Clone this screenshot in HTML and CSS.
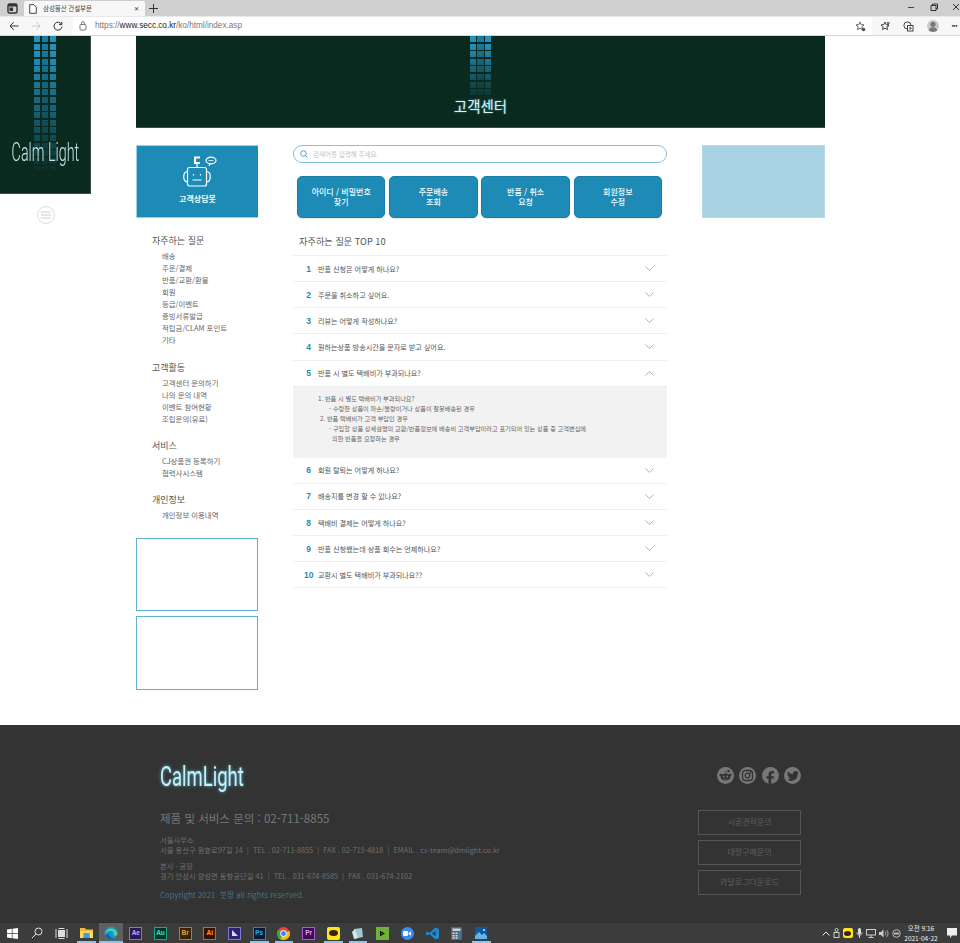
FILE: index.html
```html
<!DOCTYPE html>
<html lang="ko">
<head>
<meta charset="utf-8">
<title>삼성물산 건설부문</title>
<link rel="stylesheet" href="styles.css">
</head>
<body>
<div class="tabbar">
  <div class="tab-pin"><svg width="11" height="11" viewBox="0 0 11 11"><rect x="1" y="1" width="9" height="9" rx="1.5" fill="none" stroke="#333" stroke-width="1.4"/><rect x="1" y="1" width="9" height="2.5" fill="#333"/><rect x="2.5" y="4.5" width="3.5" height="3.5" fill="#333"/></svg></div>
  <div class="tab">
    <svg width="8" height="10" viewBox="0 0 8 10"><path d="M.7.7h4.2l2.4 2.4v6.2H.7z" fill="#fff" stroke="#444" stroke-width="1"/></svg>
    <span class="tab-title">삼성물산 건설부문</span>
    <span class="tab-x">✕</span>
  </div>
  <div class="tab-new"><svg width="9" height="9" viewBox="0 0 9 9"><path d="M4.500 0v9M0 4.500h9" stroke="#333" stroke-width="1"/></svg></div>
  <div class="winctl">
    <svg width="8" height="8" viewBox="0 0 8 8"><path d="M1 4.500h6" stroke="#444" stroke-width="1"/></svg>
    <svg width="8" height="8" viewBox="0 0 8 8"><path d="M1 2.500h5v5H1zM2.500 2.500V1h5v5H6" fill="none" stroke="#333" stroke-width="1"/></svg>
    <svg width="8" height="8" viewBox="0 0 8 8"><path d="M1 1l6 6M7 1l-6 6" stroke="#333" stroke-width="1"/></svg>
  </div>
</div>
<div class="toolbar">
  <div class="nav-btns">
    <svg width="10" height="10" viewBox="0 0 10 10"><path d="M9.500 5H1M4.700 1.200L1 5l3.700 3.800" fill="none" stroke="#333" stroke-width="1"/></svg>
    <svg width="10" height="10" viewBox="0 0 10 10"><path d="M.5 5H9M5.300 1.200L9 5 5.300 8.800" fill="none" stroke="#ccc" stroke-width="1"/></svg>
    <svg width="10" height="10" viewBox="0 0 10 10"><path d="M8.600 3.400A4 4 0 1 0 9 5.600M8.800 .8v2.800H6" fill="none" stroke="#333" stroke-width="1"/></svg>
  </div>
  <div class="omnibox">
    <svg width="8" height="10" viewBox="0 0 8 10"><rect x="1" y="3.500" width="6" height="5.500" rx="1" fill="none" stroke="#777" stroke-width="1"/><path d="M2.500 3.500V2.200a1.500 1.500 0 0 1 3 0v1.300" fill="none" stroke="#777" stroke-width="1"/></svg>
    <span class="url"><span class="url-dim">https://</span>www.secc.co.kr<span class="url-dim">/ko/html/index.asp</span></span>
    <svg class="omni-star" width="11" height="11" viewBox="0 0 11 11"><path d="M5 1l1.200 2.600 2.800.3-2.100 1.900.6 2.800L5 7.200 2.500 8.600l.6-2.800L1 3.900l2.800-.3z" fill="none" stroke="#555" stroke-width=".9"/><circle cx="8.500" cy="8.500" r="1.800" fill="#555"/></svg>
  </div>
  <div class="tool-icons">
    <svg width="11" height="11" viewBox="0 0 11 11"><path d="M5 1l1.200 2.600 2.800.3-2.100 1.900.6 2.800L5 7.200 2.500 8.600l.6-2.800L1 3.900l2.800-.3z" fill="none" stroke="#444" stroke-width="1"/><path d="M8 1v5M7 2h3" stroke="#444" stroke-width=".9"/></svg>
    <svg width="11" height="11" viewBox="0 0 11 11"><circle cx="4.500" cy="4.500" r="3.600" fill="none" stroke="#444" stroke-width="1"/><rect x="4.500" y="4.500" width="5.500" height="5.500" fill="#f7f7f7" stroke="#444" stroke-width="1"/><path d="M7.200 5.800v3M5.800 7.200h3" stroke="#444" stroke-width=".8"/></svg>
    <div class="avatar"><svg width="12" height="12" viewBox="0 0 12 12"><circle cx="6" cy="4.300" r="2.600" fill="#777"/><path d="M1.500 12c0-3.200 2-4.800 4.500-4.800s4.500 1.600 4.500 4.800z" fill="#777"/></svg></div>
    <span class="dots">···</span>
  </div>
</div>

<div class="page">
  <aside class="rail">
    <div class="logo-card">
      <div class="pixels pixels-long"><i></i><i></i><i></i></div>
      <div class="logo-word">Calm Light</div>
    </div>
    <button class="menu-btn" aria-label="메뉴"><svg width="10" height="8" viewBox="0 0 10 8"><path d="M0 1h10M0 4h10M0 7h10" stroke="#ccc" stroke-width="1"/></svg></button>
  </aside>

  <main class="main">
    <header class="hero">
      <div class="pixels pixels-short"><i></i><i></i><i></i></div>
      <h1 class="hero-title">고객센터</h1>
    </header>

    <div class="columns">
      <div class="col-left">
        <a class="bot-card">
          <svg width="38" height="36" viewBox="0 0 38 36" fill="none" stroke="#fff" stroke-width="1.2">
            <rect x="8.500" y="11.500" width="19" height="18.500" rx="2"/>
            <path d="M8.500 15.500c-5 .3-5 10 0 10.500M27.500 15.500c5 .3 5 10 0 10.500"/>
            <path d="M18 11.500V8"/>
            <path d="M21 1.500h-5v5.500h5" stroke-width="2"/>
            <ellipse cx="32" cy="4.500" rx="5" ry="3.300"/>
            <path d="M31 7.800l-1 2" />
            <path d="M29.500 4.500h5" stroke-width=".8"/>
            <path d="M14.500 18v1.500M21.500 18v1.500M13.500 24h9"/>
          </svg>
          <span>고객상담봇</span>
        </a>
        <nav class="side-nav">
          <section class="nav-group">
            <h2>자주하는 질문</h2>
            <ul><li>배송</li><li>주문/결제</li><li>반품/교환/환불</li><li>회원</li><li>등급/이벤트</li><li>증빙서류발급</li><li>적립금/CLAM 포인트</li><li>기타</li></ul>
          </section>
          <section class="nav-group">
            <h2>고객활동</h2>
            <ul><li>고객센터 문의하기</li><li>나의 문의 내역</li><li>이벤트 참여현황</li><li>조립문의(유료)</li></ul>
          </section>
          <section class="nav-group">
            <h2>서비스</h2>
            <ul><li>CJ상품권 등록하기</li><li>협력사시스템</li></ul>
          </section>
          <section class="nav-group">
            <h2>개인정보</h2>
            <ul><li>개인정보 이용내역</li></ul>
          </section>
        </nav>
        <div class="ad-box"></div>
        <div class="ad-box"></div>
      </div>

      <div class="col-center">
        <div class="search">
          <svg width="8" height="8" viewBox="0 0 8 8"><circle cx="3.500" cy="3.500" r="2.800" fill="none" stroke="#5a9fbc" stroke-width="1"/><path d="M5.500 5.500L7.500 7.500" stroke="#5a9fbc" stroke-width="1"/></svg>
          <span>검색어를 입력해 주세요.</span>
        </div>
        <div class="quick">
          <a>아이디 / 비밀번호<br>찾기</a>
          <a>주문배송<br>조회</a>
          <a>반품 / 취소<br>요청</a>
          <a>회원정보<br>수정</a>
        </div>
        <h2 class="faq-title">자주하는 질문 TOP 10</h2>
        <div class="faq">
          <div class="faq-row"><b>1</b><span>반품 신청은 어떻게 하나요?</span><svg class="chev" width="9" height="5" viewBox="0 0 9 5"><path d="M.5.500l4 4 4-4"/></svg></div>
          <div class="faq-row"><b>2</b><span>주문을 취소하고 싶어요.</span><svg class="chev" width="9" height="5" viewBox="0 0 9 5"><path d="M.5.500l4 4 4-4"/></svg></div>
          <div class="faq-row"><b>3</b><span>리뷰는 어떻게 작성하나요?</span><svg class="chev" width="9" height="5" viewBox="0 0 9 5"><path d="M.5.500l4 4 4-4"/></svg></div>
          <div class="faq-row"><b>4</b><span>원하는상품 방송시간을 문자로 받고 싶어요.</span><svg class="chev" width="9" height="5" viewBox="0 0 9 5"><path d="M.5.500l4 4 4-4"/></svg></div>
          <div class="faq-row"><b>5</b><span>반품 시 별도 택배비가 부과되나요?</span><svg class="chev" width="9" height="5" viewBox="0 0 9 5"><path d="M.5 4.500l4-4 4 4"/></svg></div>
          <div class="faq-detail">
            <p>1. 반품 시 별도 택배비가 부과되나요?</p>
            <p class="ind-a">- 수령한 상품이 파손/불량이거나 상품이 잘못배송된 경우</p>
            <p class="ind-b">2. 반품 택배비가 고객 부담인 경우</p>
            <p class="ind-a">- 구입할 상품 상세설명의 교환/반품정보에 배송비 고객부담이라고 표기되어 있는 상품 중 고객변심에</p>
            <p class="ind-c">의한 반품을 요청하는 경우</p>
          </div>
          <div class="faq-row"><b>6</b><span>회원 탈퇴는 어떻게 하나요?</span><svg class="chev" width="9" height="5" viewBox="0 0 9 5"><path d="M.5.500l4 4 4-4"/></svg></div>
          <div class="faq-row"><b>7</b><span>배송지를 변경 할 수 있나요?</span><svg class="chev" width="9" height="5" viewBox="0 0 9 5"><path d="M.5.500l4 4 4-4"/></svg></div>
          <div class="faq-row"><b>8</b><span>택배비 결제는 어떻게 하나요?</span><svg class="chev" width="9" height="5" viewBox="0 0 9 5"><path d="M.5.500l4 4 4-4"/></svg></div>
          <div class="faq-row"><b>9</b><span>반품 신청했는데 상품 회수는 언제하나요?</span><svg class="chev" width="9" height="5" viewBox="0 0 9 5"><path d="M.5.500l4 4 4-4"/></svg></div>
          <div class="faq-row"><b>10</b><span>교환시 별도 택배비가 부과되나요??</span><svg class="chev" width="9" height="5" viewBox="0 0 9 5"><path d="M.5.500l4 4 4-4"/></svg></div>
        </div>
      </div>

      <div class="col-right"><div class="promo"></div></div>
    </div>
  </main>
</div>

<footer class="footer">
  <div class="foot-left">
    <div class="foot-logo">CalmLight</div>
    <div class="foot-phone">제품 및 서비스 문의 : 02-711-8855</div>
    <div class="foot-addr">
      <p>서울사무소</p>
      <p>서울 용산구 원효로97길 14 &nbsp;|&nbsp; TEL . 02-711-8855 &nbsp;|&nbsp; FAX . 02-719-4818 &nbsp;|&nbsp; EMAIL . cs-team@dmlight.co.kr</p>
    </div>
    <div class="foot-addr">
      <p>본사 · 공장</p>
      <p>경기 안성시 양성면 동항공단길 41 &nbsp;|&nbsp; TEL . 031-674-8585 &nbsp;|&nbsp; FAX . 031-674-2102</p>
    </div>
    <div class="foot-copy">Copyright 2021. 붓짱 all rights reserved.</div>
  </div>
  <div class="foot-right">
    <div class="social">
      <span><svg width="13" height="13" viewBox="0 0 13 13"><ellipse cx="6.500" cy="8" rx="5" ry="3.500" fill="#333"/><circle cx="1.800" cy="6" r="1.300" fill="#333"/><circle cx="11.200" cy="6" r="1.300" fill="#333"/><circle cx="9.800" cy="2.200" r="1.100" fill="#333"/><path d="M6.500 4.500L7.200 2l2.500.3" fill="none" stroke="#333" stroke-width=".7"/><circle cx="4.700" cy="7.500" r=".9" fill="#777"/><circle cx="8.300" cy="7.500" r=".9" fill="#777"/><path d="M4.700 9.700c1 .7 2.600.7 3.600 0" fill="none" stroke="#777" stroke-width=".6"/></svg></span>
      <span><svg width="13" height="13" viewBox="0 0 13 13" fill="none" stroke="#333" stroke-width="1.300"><rect x="1.500" y="1.500" width="10" height="10" rx="2.800"/><circle cx="6.500" cy="6.500" r="2.300"/><circle cx="9.500" cy="3.500" r=".4"/></svg></span>
      <span><svg width="17" height="17" viewBox="0 0 24 24"><path d="M14 9h3V5.500h-3c-2.800 0-4.800 2-4.800 4.800V13H6.500v3.500h2.700V24h3.800v-7.500h3.200l.8-3.500h-4v-2.700c0-.7.400-1.300 1-1.300z" fill="#333"/></svg></span>
      <span><svg width="12" height="12" viewBox="0 0 24 24"><path fill="#333" d="M23.953 4.570a10 10 0 01-2.825.775 4.958 4.958 0 002.163-2.723c-.951.555-2.005.959-3.127 1.184a4.920 4.920 0 00-8.384 4.482C7.690 8.095 4.067 6.130 1.640 3.162a4.822 4.822 0 00-.666 2.475c0 1.710.870 3.213 2.188 4.096a4.904 4.904 0 01-2.228-.616v.060a4.923 4.923 0 003.946 4.827 4.996 4.996 0 01-2.212.085 4.936 4.936 0 004.604 3.417 9.867 9.867 0 01-6.102 2.105c-.390 0-.779-.023-1.170-.067a13.995 13.995 0 007.557 2.209c9.053 0 13.998-7.496 13.998-13.985 0-.210 0-.420-.015-.630A9.935 9.935 0 0024 4.590z"/></svg></span>
    </div>
    <a class="foot-btn">시공견적문의</a>
    <a class="foot-btn">대량구매문의</a>
    <a class="foot-btn">카달로그다운로드</a>
  </div>
</footer>

<div class="taskbar">
  <div class="task-apps">
    <span class="app"><svg width="13" height="13" viewBox="0 0 13 13" fill="#fff"><path d="M1 2.500l4.800-.7v4.400H1zM6.500 1.700L12 1v5.200H6.500zM1 6.900h4.800v4.300L1 10.500zM6.500 6.900H12V12l-5.500-.8z"/></svg></span>
    <span class="app"><svg width="12" height="12" viewBox="0 0 12 12" fill="none" stroke="#ddd" stroke-width="1"><circle cx="7.500" cy="4.500" r="3.500"/><path d="M5 7L1 11"/></svg></span>
    <span class="app"><svg width="13" height="11" viewBox="0 0 13 11" fill="none" stroke="#ddd" stroke-width="1"><rect x="3.500" y="2.500" width="6" height="6" fill="#ddd"/><path d="M1 1v9M12 1v9M3.500 .5h6M3.500 10.500h6"/></svg></span>
    <span class="app run"><svg width="13" height="12" viewBox="0 0 13 12"><path d="M0 1h5l1 1.500h7V11H0z" fill="#f0b93a"/><rect x="0" y="4" width="13" height="7" fill="#ffd766"/><rect x="3.500" y="6" width="6" height="5" fill="#3f9ad6"/></svg></span>
    <span class="app run active"><svg width="14" height="14" viewBox="0 0 14 14"><circle cx="7" cy="7" r="6.500" fill="#1593d8"/><path d="M1 8c.5-4 4-6 7-5.500 3 .5 5.500 3 5.500 5.500 0 2-3 2-4 1 1-3-1-4-3-4S2.500 6 1 8z" fill="#4dd48a"/><path d="M5 8.500C5 11 8 13 11 11.500 8 14 3 13 1.800 9.500 2.500 8 4 7.500 5 8.500z" fill="#0a5fa8"/></svg></span>
    <span class="app"><em class="tile t-ae">Ae</em></span>
    <span class="app"><em class="tile t-au">Au</em></span>
    <span class="app"><em class="tile t-br">Br</em></span>
    <span class="app"><em class="tile t-ai">Ai</em></span>
    <span class="app"><em class="tile t-in"><svg width="8" height="8" viewBox="0 0 8 8"><path d="M1 1l6 6H1z" fill="#d9d9ff"/></svg></em></span>
    <span class="app run"><em class="tile t-ps">Ps</em></span>
    <span class="app run"><svg width="13" height="13" viewBox="0 0 13 13"><circle cx="6.500" cy="6.500" r="6.500" fill="#e8453c"/><path d="M6.500 6.500L1 10a6.500 6.500 0 0 0 5.500 3 6.500 6.500 0 0 0 6-9z" fill="#fbbc05"/><path d="M6.500 6.500L3.200 12a6.500 6.500 0 0 1-2.400-9z" fill="#30a853"/><circle cx="6.500" cy="6.500" r="3" fill="#4285f4" stroke="#fff" stroke-width="1"/></svg></span>
    <span class="app"><em class="tile t-pr">Pr</em></span>
    <span class="app run"><span class="kakao"><i></i></span></span>
    <span class="app run"><svg width="13" height="13" viewBox="0 0 13 13"><path d="M3 2l8-1 1 9-9 2z" fill="#9cc9d6"/><path d="M1 5l3-3 3 9-4 1z" fill="#d7e6ea"/></svg></span>
    <span class="app"><span class="play"><svg width="7" height="7" viewBox="0 0 7 7"><path d="M1 .8l5 2.700-5 2.700zM2.200 2.700v1.600l1.500-.8z" fill="#111" fill-rule="evenodd"/></svg></span></span>
    <span class="app"><span class="zoom"><svg width="8" height="5" viewBox="0 0 8 5" fill="#fff"><rect width="5" height="5" rx="1"/><path d="M5.500 2L8 .5v4L5.500 3z"/></svg></span></span>
    <span class="app"><svg width="13" height="13" viewBox="0 0 13 13"><path d="M9.500.5L13 2v9l-3.500 1.500L3.500 7l-2 1.500L0 7.500v-2L1.500 4.500l2 1.500zM9.500 3.800L6 6.500l3.500 2.700z" fill="#1f8ad2" fill-rule="evenodd"/></svg></span>
    <span class="app"><svg width="11" height="13" viewBox="0 0 11 13"><rect width="11" height="13" fill="#59636e"/><rect x="1.500" y="1.500" width="8" height="2.500" fill="#c5d3dc"/><path d="M1.500 5.500h2v1.500h-2zM4.500 5.500h2v1.500h-2zM1.500 8h2v1.500h-2zM4.500 8h2v1.500h-2zM1.500 10.200h2v1.500h-2zM4.500 10.200h2v1.500h-2z" fill="#dfe5ea"/><rect x="7.500" y="5.500" width="2" height="6.200" fill="#1f8ad2"/></svg></span>
    <span class="app run"><svg width="12" height="12" viewBox="0 0 12 12"><rect width="12" height="12" fill="#0f5a9c"/><path d="M0 9l4-4 3 3 2-2 3 3v3H0z" fill="#5fb6ec"/><circle cx="9" cy="3" r="1" fill="#d5ecff"/></svg></span>
  </div>
  <div class="tray">
    <svg width="8" height="5" viewBox="0 0 8 5"><path d="M.5 4.500L4 1l3.500 3.500" fill="none" stroke="#eee"/></svg>
    <svg width="7" height="10" viewBox="0 0 7 10"><circle cx="3.500" cy="2" r="1.500" fill="none" stroke="#ccc"/><rect x="1" y="4.500" width="5" height="5" fill="none" stroke="#ccc"/></svg>
    <span class="kakao small"><i></i></span>
    <svg width="7" height="10" viewBox="0 0 7 10"><rect x="2" width="3" height="6.500" rx="1.500" fill="#ddd"/><path d="M3.500 7v3M1 4.500c0 3.500 5 3.500 5 0" stroke="#ddd" fill="none"/></svg>
    <svg width="10" height="9" viewBox="0 0 10 9"><rect x=".5" y=".5" width="9" height="5.500" fill="none" stroke="#ccc"/><path d="M5 6v2.500M2.500 8.500h5" stroke="#ccc"/></svg>
    <svg width="10" height="9" viewBox="0 0 10 9"><path d="M0 3h2l2.500-2.500v8L2 6H0z" fill="#ccc"/><path d="M6 2.500c1 1 1 3 0 4M7.800 1.200c1.600 1.600 1.600 5 0 6.600" fill="none" stroke="#ccc" stroke-width=".8"/></svg>
    <svg width="9" height="9" viewBox="0 0 9 9"><circle cx="4.500" cy="4.500" r="3.800" fill="none" stroke="#bbb"/><path d="M2 3.500h5v2H2z" fill="#bbb"/></svg>
    <div class="clock"><span>오전 9:16</span><span>2021-04-22</span></div>
    <svg class="notif" width="10" height="10" viewBox="0 0 10 10"><path d="M0 0h10v7.500H5L3 10V7.500H0z" fill="#eee"/></svg>
  </div>
</div>
</body>
</html>
```
FILE: styles.css
```css
* { box-sizing: border-box; }
html, body { margin: 0; padding: 0; }
body {
  width: 960px;
  height: 943px;
  overflow: hidden;
  background: #fff;
  font-family: "Noto Sans CJK KR", "Noto Sans", sans-serif;
  color: #555;
  display: flex;
  flex-direction: column;
}
h1, h2, p, ul { margin: 0; padding: 0; font-weight: 400; }
ul { list-style: none; }
svg { display: block; flex: none; }

/* browser chrome */
.tabbar { height: 16px; background: #cfcfcf; display: flex; align-items: flex-end; flex: none; }
.tab-pin { width: 24px; height: 16px; display: flex; align-items: center; justify-content: center; }
.tab { width: 121px; height: 15px; background: #f7f7f7; border-radius: 2px 2px 0 0; display: flex; align-items: center; padding: 0 6px 0 5px; gap: 6px; }
.tab-title { font-size: 6.400px; line-height: 10px; color: #444; flex: 1; white-space: nowrap; }
.tab-x { font-size: 6px; line-height: 8px; color: #333; }
.tab-new { width: 16px; height: 16px; display: flex; align-items: center; justify-content: center; }
.winctl { margin-left: auto; width: 53px; height: 14px; align-self: flex-start; display: flex; align-items: center; justify-content: space-between; }
.toolbar { height: 20px; background: #f7f7f7; border-top: 1px solid #e9e9e9; border-bottom: 1px solid #d8d8d8; display: flex; align-items: center; flex: none; }
.nav-btns { width: 73px; padding: 0 10px 0 9px; display: flex; justify-content: space-between; }
.omnibox { width: 799px; height: 18px; background: #fff; display: flex; align-items: center; padding-left: 6px; gap: 8px; }
.url { font: 8.200px/12px "Liberation Sans", sans-serif; color: #222; flex: 1; }
.url-dim { color: #777; }
.omni-star { margin-right: 6px; }
.tool-icons { flex: 1; display: flex; align-items: center; justify-content: space-between; padding: 0 3px 0 8px; }
.avatar { width: 12px; height: 12px; border-radius: 50%; background: #c8c8c8; overflow: hidden; }
.dots { font-size: 9px; line-height: 10px; color: #333; font-weight: 700; letter-spacing: -1px; }

/* page */
.page { height: 689px; flex: none; display: flex; }
.rail { width: 91px; margin-right: 45px; display: flex; flex-direction: column; align-items: center; }
.logo-card { width: 91px; height: 158px; background: #0b2a1f; border-right: 1px solid #3d4f45; border-bottom: 1px solid #3d4f45; display: grid; grid-template-columns: 90px; justify-items: center; }
.logo-card > * { grid-area: 1 / 1; }
.logo-word { margin-top: 102px; font: 300 26px/28px Roboto, sans-serif; color: #c4e6ea; transform: scaleX(.55); white-space: nowrap; }
.menu-btn { margin-top: 12px; width: 18px; height: 18px; border-radius: 50%; border: 1px solid #ddd; background: #fff; padding: 0; display: flex; align-items: center; justify-content: center; }

.pixels { display: flex; gap: 1.500px; width: 22px; }
.pixels i { flex: 1; background: repeating-linear-gradient(to bottom, #2291be 0 6px, transparent 6px 7.620px); }
.pixels i:nth-child(2) { background: repeating-linear-gradient(to bottom, #1a7a9f 0 6px, transparent 6px 7.620px); }
.pixels-long { height: 134px; -webkit-mask-image: linear-gradient(to bottom, #000 10%, rgba(0,0,0,.07) 100%); mask-image: linear-gradient(to bottom, #000 10%, rgba(0,0,0,.07) 100%); }
.pixels-short { height: 60px; flex: none; -webkit-mask-image: linear-gradient(to bottom, #000 15%, rgba(0,0,0,.1) 100%); mask-image: linear-gradient(to bottom, #000 15%, rgba(0,0,0,.1) 100%); }

.main { width: 689px; }
.hero { height: 92px; background: #0b2a1f; border-bottom: 1px solid #3d4f45; display: flex; flex-direction: column; align-items: center; }
.hero-title { font-size: 14.500px; line-height: 20px; font-weight: 400; color: #d8f2f5; text-shadow: 0 0 2px #4aa7c2; }

.columns { margin-top: 17px; display: flex; }
.col-left { width: 122px; margin-right: 35px; }
.col-center { width: 374px; margin-right: 35px; }
.col-right { width: 123px; }

.bot-card { height: 73px; background: #1e8bb6; border: 1px solid #9fd0e2; border-width: 1px 0 1px 1px; display: flex; flex-direction: column; align-items: center; padding-top: 10px; }
.bot-card span { margin-top: 1px; font-size: 8px; line-height: 12px; font-weight: 700; color: #f2fafc; }

.side-nav { margin: 17px 0 17px 16px; display: flex; flex-direction: column; gap: 15.500px; }
.nav-group h2 { font-size: 9px; line-height: 12px; color: #555; margin-bottom: 3px; }
.nav-group li { font-size: 7.400px; line-height: 12px; color: #666; padding-left: 10px; white-space: nowrap; }
.nav-group:last-child { margin-top: -1px; }
.ad-box { height: 73.500px; border: 1px solid #5fb0d0; margin-bottom: 5px; }

.search { height: 18px; border: 1px solid #86c3db; border-radius: 9px; display: flex; align-items: center; gap: 5px; padding-left: 6px; }
.search span { font-size: 6.500px; line-height: 10px; color: #c4c4c4; }
.quick { margin-top: 13px; padding: 0 5px 0 4px; display: grid; grid-template-columns: repeat(4, 1fr); gap: 3.800px; }
.quick a { height: 42px; background: #1e8bb6; border: 1px solid #1a7ea6; border-radius: 5px; box-shadow: 0 1px 2px rgba(0,0,0,.12); color: #f4fbfd; font-size: 8px; line-height: 10px; font-weight: 500; text-align: center; display: flex; align-items: center; justify-content: center; }
.faq-title { margin: 17px 0 8px 6px; font-size: 9.200px; line-height: 12px; color: #555; }
.faq { border-top: 1px solid #eee; }
.faq-row { height: 26.150px; border-bottom: 1px solid #eee; display: flex; align-items: center; padding: 0 13px 0 11px; font-size: 7.100px; color: #555; }
.faq-row b { width: 7px; margin-right: 7px; font-size: 8.500px; font-weight: 700; color: #1e8bb6; text-align: right; flex: none; font-family: "Liberation Sans", sans-serif; }
.faq-row span { flex: 1; line-height: 12px; white-space: nowrap; }
.chev { fill: none; stroke: #aaa; stroke-width: .9; }
.faq-detail { height: 71px; background: #f2f2f2; padding: 7px 0 0 25px; }
.faq-detail p { font-size: 6.200px; line-height: 10px; color: #666; white-space: nowrap; }
.faq-detail .ind-a { padding-left: 11px; }
.faq-detail .ind-b { padding-left: 2px; }
.faq-detail .ind-c { padding-left: 14px; }

.promo { height: 73px; background: #a8d1e2; border: 1px solid #b7dae8; }

/* footer */
.footer { height: 197px; flex: none; background: #333; padding: 0 159px 0 160px; display: flex; justify-content: space-between; }
.foot-logo { margin-top: 36px; height: 32px; font: 400 28px/32px Roboto, sans-serif; color: #c6f0fa; text-shadow: 0 0 4px #5fc2dc; transform: scaleX(.66); transform-origin: left center; white-space: nowrap; }
.foot-phone { margin-top: 17px; font-size: 11.500px; line-height: 16px; color: #777; white-space: nowrap; }
.foot-addr { margin-top: 9px; font-size: 7.300px; line-height: 10px; color: #6f6f6f; white-space: nowrap; }
.foot-addr + .foot-addr { margin-top: 6px; }
.foot-copy { margin-top: 9px; font-size: 7.800px; line-height: 10px; color: #3f7486; white-space: nowrap; }
.foot-right { width: 103px; display: flex; flex-direction: column; }
.social { margin-top: 42px; margin-bottom: 26px; display: flex; justify-content: flex-end; gap: 5.500px; }
.social span { width: 17px; height: 17px; border-radius: 50%; background: #777; display: flex; align-items: center; justify-content: center; overflow: hidden; }
.foot-btn { height: 24.500px; border: 1px solid #555; margin-bottom: 5.500px; font-size: 8px; line-height: 22px; color: #5e5e5e; text-align: center; }

/* taskbar */
.taskbar { height: 21px; flex: none; background: #3c3c3c; border-top: 1px solid #2e2e2e; display: flex; align-items: stretch; justify-content: space-between; }
.task-apps { display: flex; }
.app { width: 24.700px; display: flex; align-items: center; justify-content: center; position: relative; }
.app.run::after { content: ""; position: absolute; left: 3px; right: 3px; bottom: 0; height: 2px; background: #8cc6e8; }
.app.active { background: #5f5f5f; }
.app.active::after { left: 0; right: 0; }
.tile { width: 13px; height: 13px; display: flex; align-items: center; justify-content: center; font: 700 6.500px/8px "Liberation Sans", sans-serif; border: 1px solid; }
.t-ae { background: #2a1a4f; color: #c5a8ff; border-color: #8f6fe0; }
.t-au { background: #00332e; color: #3be3bb; border-color: #17a68a; }
.t-br { background: #3a2300; color: #e8a33d; border-color: #b87a20; }
.t-ai { background: #3a1300; color: #ff9a2e; border-color: #c96a10; }
.t-in { background: #2d2470; border-color: #7f76d8; }
.t-ps { background: #001e36; color: #31a8ff; border-color: #1f86cc; }
.t-pr { background: #3a0f55; color: #e6a0ff; border-color: #a55ccf; }
.kakao { width: 13px; height: 13px; background: #ffe812; border-radius: 2px; display: flex; align-items: center; justify-content: center; }
.kakao i { width: 9px; height: 6px; border-radius: 50%; background: #3a1d1d; }
.kakao.small { width: 10px; height: 10px; }
.kakao.small i { width: 7px; height: 5px; }
.play { width: 13px; height: 13px; background: #6fb13a; display: flex; align-items: center; justify-content: center; }
.zoom { width: 13px; height: 13px; border-radius: 50%; background: #3a8cf0; display: flex; align-items: center; justify-content: center; }
.tray { display: flex; align-items: center; gap: 3px; padding-right: 3px; }
.clock { width: 44px; margin: 0 1px 0 -4.500px; display: flex; flex-direction: column; align-items: center; font-size: 6.500px; line-height: 10px; color: #eee; white-space: nowrap; }
```
